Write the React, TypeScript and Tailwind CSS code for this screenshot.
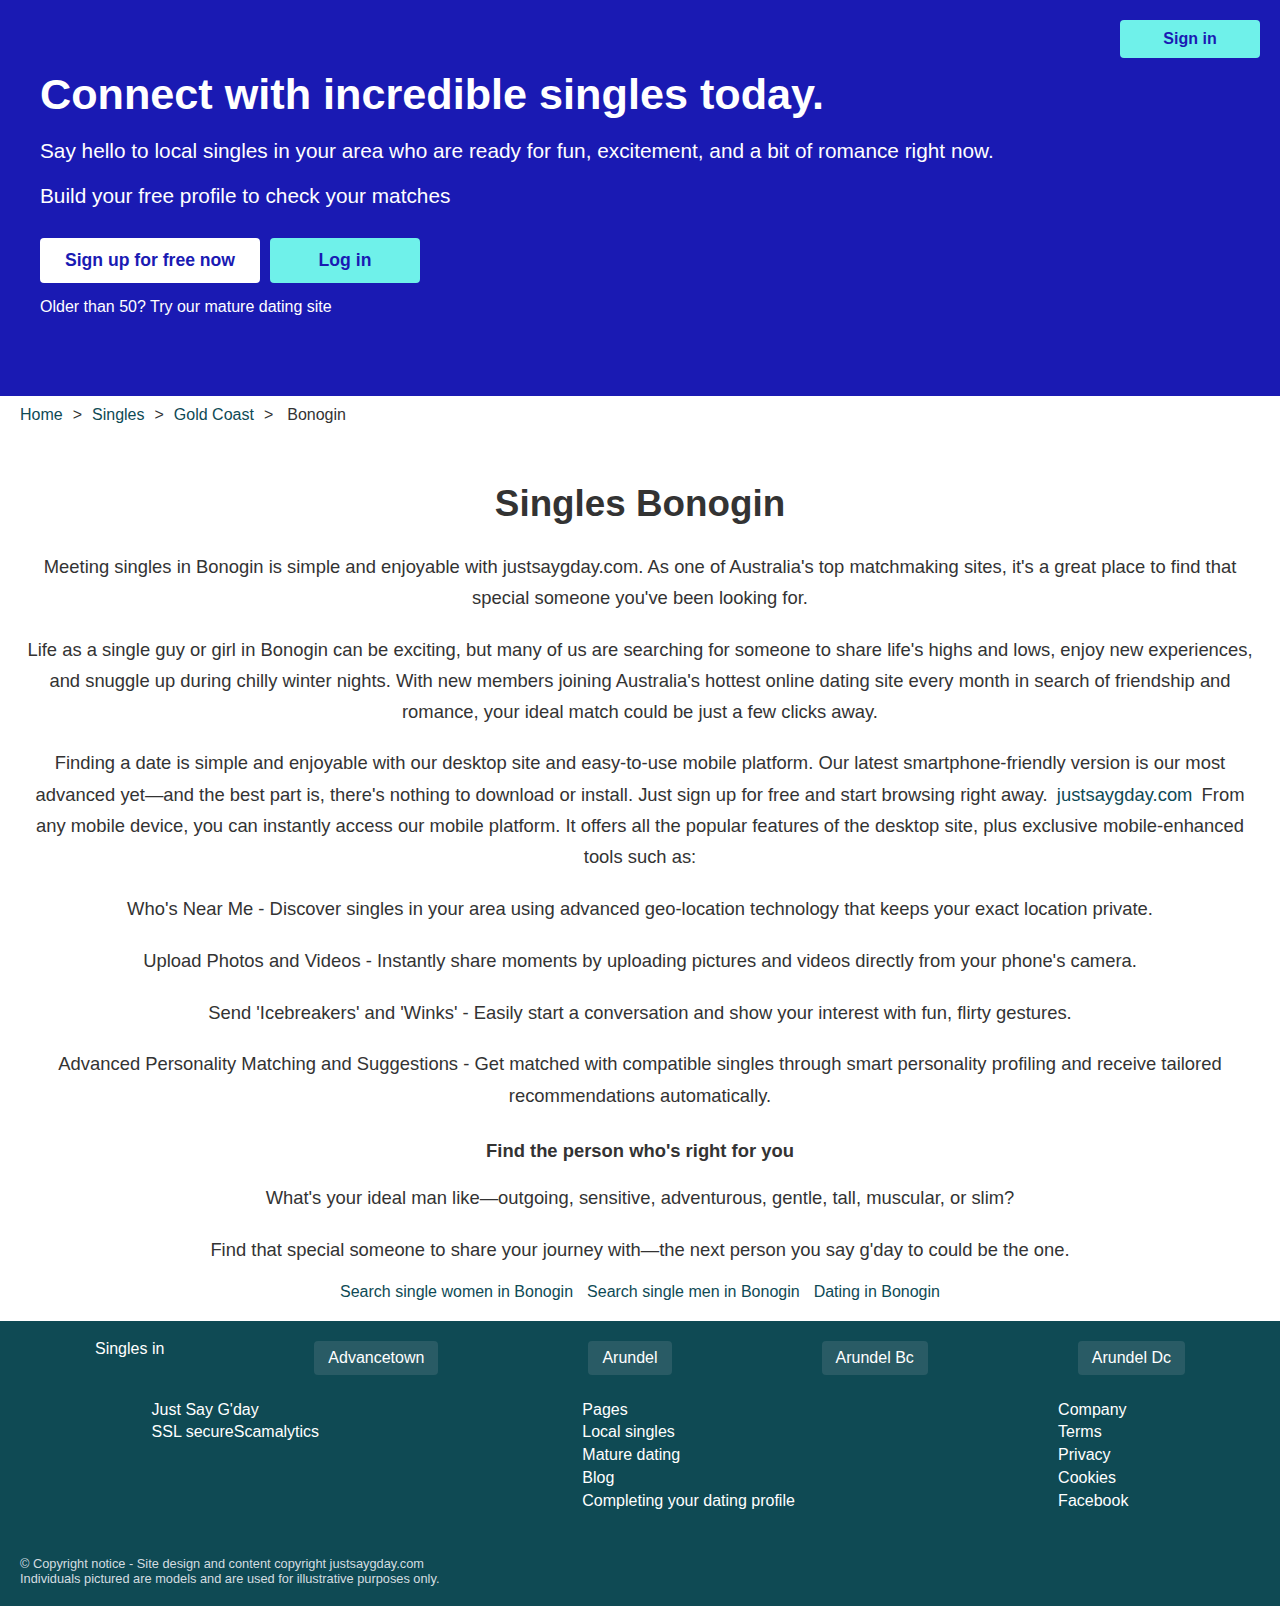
const font = { fontFamily: '"Liberation Sans", Arial, sans-serif' };

const features = [
  "Who's Near Me - Discover singles in your area using advanced geo-location technology that keeps your exact location private.",
  "Upload Photos and Videos - Instantly share moments by uploading pictures and videos directly from your phone's camera.",
  "Send 'Icebreakers' and 'Winks' - Easily start a conversation and show your interest with fun, flirty gestures.",
  "Advanced Personality Matching and Suggestions - Get matched with compatible singles through smart personality profiling and receive tailored recommendations automatically.",
];

const towns = ["Advancetown", "Arundel", "Arundel Bc", "Arundel Dc"];

const pages = ["Pages", "Local singles", "Mature dating", "Blog", "Completing your dating profile"];
const company = ["Company", "Terms", "Privacy", "Cookies", "Facebook"];

function Hero() {
  return (
    <header className="relative h-[396px] bg-[#1a1ab3] px-10 pt-[68px] text-white">
      <a
        href="#"
        className="absolute right-5 top-5 flex h-[38px] w-[140px] items-center justify-center rounded bg-[#6ff1ea] text-base font-bold text-[#1a1ab3]"
      >
        Sign in
      </a>
      <h1 className="text-[43.2px] font-bold leading-[52px]">
        Connect with incredible singles today.
      </h1>
      <p className="mt-[19px] text-[20.8px] leading-6">
        Say hello to local singles in your area who are ready for fun, excitement, and a bit of romance right now.
      </p>
      <p className="mt-[21px] text-[20.8px] leading-6">Build your free profile to check your matches</p>
      <div className="mt-[30px] flex gap-2.5">
        <a
          href="#"
          className="flex h-[45px] w-[220px] items-center justify-center rounded bg-white text-[17.6px] font-bold text-[#1a1ab3]"
        >
          Sign up for free now
        </a>
        <a
          href="#"
          className="flex h-[45px] w-[150px] items-center justify-center rounded bg-[#6ff1ea] text-[17.6px] font-bold text-[#1a1ab3]"
        >
          Log in
        </a>
      </div>
      <p className="mt-[14px] text-base leading-5">Older than 50? Try our mature dating site</p>
    </header>
  );
}

function Breadcrumb() {
  return (
    <nav className="flex items-center px-5 pt-[9px] text-base leading-5 text-[#333]">
      <a href="#" className="text-[#0e4a55]">Home</a>
      <span className="mx-2.5">&gt;</span>
      <a href="#" className="text-[#0e4a55]">Singles</a>
      <span className="mx-2.5">&gt;</span>
      <a href="#" className="text-[#0e4a55]">Gold Coast</a>
      <span className="ml-2.5 mr-3.5">&gt;</span>
      <span>Bonogin</span>
    </nav>
  );
}

function Content() {
  return (
    <main className="px-5 pb-[19px] pt-[57px] text-center text-[18.4px] leading-[1.7] text-[#333]">
      <h2 className="text-[36.8px] font-bold leading-[44px]">Singles Bonogin</h2>
      <p className="mt-[25px]">
        Meeting singles in Bonogin is simple and enjoyable with justsaygday.com. As one of Australia's top matchmaking sites, it's a great place to find that special someone you've been looking for.
      </p>
      <p className="mt-[20px]">
        Life as a single guy or girl in Bonogin can be exciting, but many of us are searching for someone to share life's highs and lows, enjoy new experiences, and snuggle up during chilly winter nights. With new members joining Australia's hottest online dating site every month in search of friendship and romance, your ideal match could be just a few clicks away.
      </p>
      <p className="mt-[20px]">
        Finding a date is simple and enjoyable with our desktop site and easy-to-use mobile platform. Our latest smartphone-friendly version is our most advanced yet—and the best part is, there's nothing to download or install. Just sign up for free and start browsing right away.{" "}
        <a href="#" className="mx-1 text-[#0e4a55]">justsaygday.com</a>{" "}
        From any mobile device, you can instantly access our mobile platform. It offers all the popular features of the desktop site, plus exclusive mobile-enhanced tools such as:
      </p>
      {features.map((f) => (
        <p key={f} className="mt-[20.5px]">
          {f}
        </p>
      ))}
      <h3 className="mt-[24px] font-bold">Find the person who's right for you</h3>
      <p className="mt-[16px]">
        What's your ideal man like—outgoing, sensitive, adventurous, gentle, tall, muscular, or slim?
      </p>
      <p className="mt-[20px]">
        Find that special someone to share your journey with—the next person you say g'day to could be the one.
      </p>
      <div className="mt-[17px] flex justify-center gap-3.5 text-base leading-5 text-[#0e4a55]">
        <a href="#">Search single women in Bonogin</a>
        <a href="#">Search single men in Bonogin</a>
        <a href="#">Dating in Bonogin</a>
      </div>
    </main>
  );
}

function Footer() {
  return (
    <footer className="bg-[#0f4a54] px-5 pb-[21px] pt-5 text-base text-white">
      <div className="flex items-start justify-around">
        <span className="mt-[-1px] leading-[18px]">Singles in</span>
        {towns.map((t) => (
          <a key={t} href="#" className="rounded bg-[#295b65] px-3.5 py-[7px] leading-5">
            {t}
          </a>
        ))}
      </div>
      <div className="mt-[24px] flex items-start justify-around leading-[22.7px]">
        <ul>
          <li>Just Say G'day</li>
          <li>SSL secureScamalytics</li>
        </ul>
        <ul>
          {pages.map((p) => (
            <li key={p}>{p}</li>
          ))}
        </ul>
        <ul>
          {company.map((c) => (
            <li key={c}>{c}</li>
          ))}
        </ul>
      </div>
      <div className="mt-[44px] text-[12.8px] leading-[15px] text-[#d4dde0]">
        <p>© Copyright notice - Site design and content copyright justsaygday.com</p>
        <p>Individuals pictured are models and are used for illustrative purposes only.</p>
      </div>
    </footer>
  );
}

export default function App() {
  return (
    <div className="min-h-[1606px] bg-white" style={font}>
      <Hero />
      <Breadcrumb />
      <Content />
      <Footer />
    </div>
  );
}
